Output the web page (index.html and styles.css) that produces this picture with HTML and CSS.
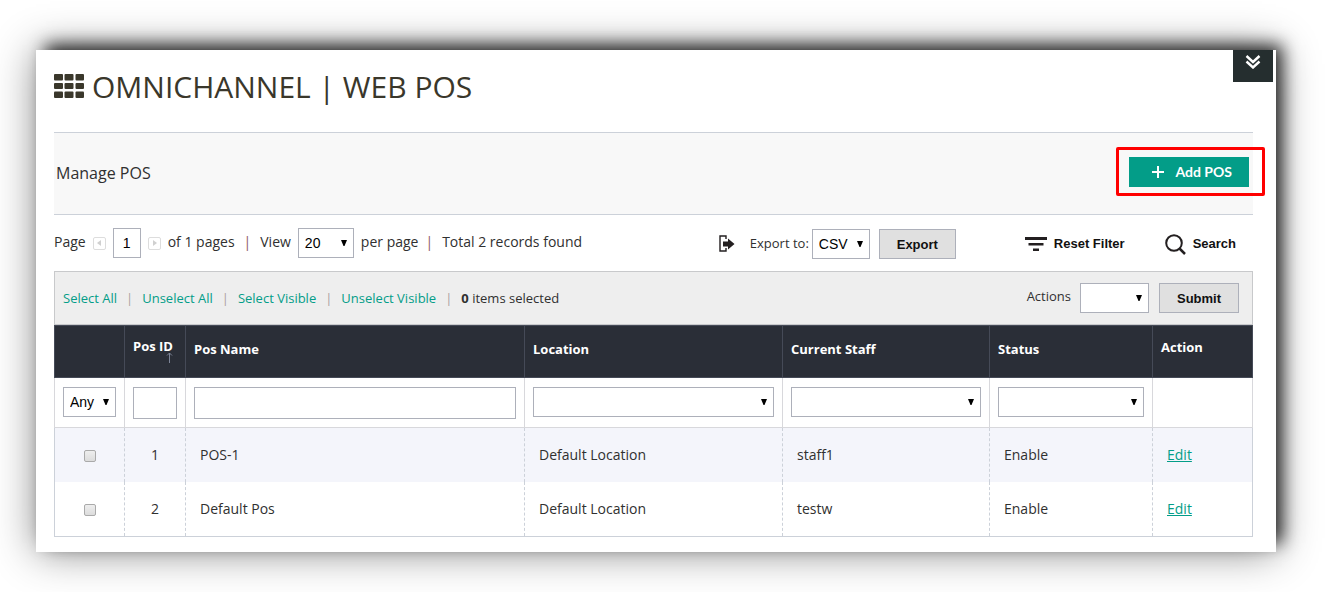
FILE: index.html
```html
<!DOCTYPE html>
<html lang="en">
<head>
<meta charset="utf-8">
<title>Omnichannel | Web POS</title>
<link rel="stylesheet" href="styles.css">
</head>
<body>
<main class="panel">
  <header class="masthead">
    <svg class="grid-icon" viewBox="0 0 30 24" aria-hidden="true">
      <g fill="#3a372b">
        <rect x="0" y="0" width="9" height="6.500" rx="1"/><rect x="10.500" y="0" width="9" height="6.500" rx="1"/><rect x="21.500" y="0" width="8.500" height="6.500" rx="1"/>
        <rect x="0" y="9" width="9" height="6" rx="1"/><rect x="10.500" y="9" width="9" height="6" rx="1"/><rect x="21.500" y="9" width="8.500" height="6" rx="1"/>
        <rect x="0" y="17.500" width="9" height="6.500" rx="1"/><rect x="10.500" y="17.500" width="9" height="6.500" rx="1"/><rect x="21.500" y="17.500" width="8.500" height="6.500" rx="1"/>
      </g>
    </svg>
    <h1 class="title">OMNICHANNEL | WEB POS</h1>
    <button class="menu-toggle" type="button" aria-label="Expand menu">
      <svg width="16" height="14" viewBox="0 0 16 14" fill="none" stroke="#fff" stroke-width="2.400"><path d="M1.500 1 8 7l6.500-6M1.500 6.500 8 12.500l6.500-6"/></svg>
    </button>
  </header>

  <section class="subhead">
    <h2 class="subtitle">Manage POS</h2>
    <div class="highlight">
      <button class="add-btn" type="button">
        <svg width="12" height="12" viewBox="0 0 12 12" stroke="#fff" stroke-width="2"><path d="M6 0v12M0 6h12"/></svg>
        Add POS
      </button>
    </div>
  </section>

  <section class="toolbar">
    <div class="pager">
      <label for="page">Page</label>
      <button class="step" type="button" aria-label="Previous page"><svg width="5" height="6" viewBox="0 0 5 6"><path fill="#d0d0d0" d="M4 0v6L0 3z"/></svg></button>
      <input class="field page-field" id="page" type="text" value="1">
      <button class="step" type="button" aria-label="Next page"><svg width="5" height="6" viewBox="0 0 5 6"><path fill="#d0d0d0" d="M1 0v6l4-3z"/></svg></button>
      <span>of 1 pages</span>
      <span class="bar">|</span>
      <label for="view">View</label>
      <select class="field select view-select" id="view"><option>20</option></select>
      <span>per page</span>
      <span class="bar bar-tight">|</span>
      <span>Total 2 records found</span>
    </div>
    <div class="tools">
      <svg class="export-icon" width="16" height="18" viewBox="0 0 16 18" aria-hidden="true"><path d="M7 4V1H1v15h6v-3" fill="none" stroke="#231f20" stroke-width="1.400"/><path d="M4 6.500h5V3.500L15.500 9 9 14.500v-3H4z" fill="#231f20"/></svg>
      <label class="export-label" for="export">Export to:</label>
      <select class="field select export-select" id="export"><option>CSV</option></select>
      <button class="btn export-btn" type="button">Export</button>
      <button class="link-btn reset-btn" type="button">
        <svg width="22" height="14" viewBox="0 0 22 14" fill="#231f20"><path d="M0 0h22v3H0zM3.500 6h15v2.500h-15zM8 11.500h6V14H8z"/></svg>
        Reset Filter
      </button>
      <button class="link-btn" type="button">
        <svg width="21" height="21" viewBox="0 0 21 21" fill="none" stroke="#231f20" stroke-width="2"><circle cx="9" cy="9" r="7.800"/><path d="m14.500 14.500 5.500 5.500" stroke-width="2.500"/></svg>
        Search
      </button>
    </div>
  </section>

  <section class="massaction">
    <nav class="select-links">
      <a href="#">Select All</a><span class="sep">|</span><a href="#">Unselect All</a><span class="sep">|</span><a href="#">Select Visible</a><span class="sep">|</span><a href="#">Unselect Visible</a><span class="sep">|</span><span><strong>0</strong> items selected</span>
    </nav>
    <div class="actions">
      <label class="actions-label" for="actions">Actions</label>
      <select class="field select actions-select" id="actions"><option></option></select>
      <button class="btn submit-btn" type="button">Submit</button>
    </div>
  </section>

  <table class="grid">
    <colgroup><col class="c-check"><col class="c-id"><col><col class="c-loc"><col class="c-staff"><col class="c-status"><col class="c-action"></colgroup>
    <thead>
      <tr class="heads">
        <th></th>
        <th class="sorted">Pos ID<svg class="sort-icon" width="7" height="11" viewBox="0 0 7 11" fill="none" stroke="#7d8598"><path d="M3.500 11V1M1 3.500 3.500 1 6 3.500"/></svg></th>
        <th>Pos Name</th><th>Location</th><th>Current Staff</th><th>Status</th><th class="plain">Action</th>
      </tr>
      <tr class="filters">
        <td><select class="field select" aria-label="Selection"><option>Any</option></select></td>
        <td><input class="field tall" type="text" aria-label="Pos ID"></td>
        <td><input class="field tall" type="text" aria-label="Pos Name"></td>
        <td><select class="field select" aria-label="Location"><option></option></select></td>
        <td><select class="field select" aria-label="Current Staff"><option></option></select></td>
        <td><select class="field select" aria-label="Status"><option></option></select></td>
        <td></td>
      </tr>
    </thead>
    <tbody>
      <tr class="odd">
        <td class="center"><input class="check" type="checkbox" aria-label="Select POS-1"></td>
        <td class="center">1</td><td>POS-1</td><td>Default Location</td><td>staff1</td><td>Enable</td><td><a class="edit" href="#">Edit</a></td>
      </tr>
      <tr>
        <td class="center"><input class="check" type="checkbox" aria-label="Select Default Pos"></td>
        <td class="center">2</td><td>Default Pos</td><td>Default Location</td><td>testw</td><td>Enable</td><td><a class="edit" href="#">Edit</a></td>
      </tr>
    </tbody>
  </table>
</main>
</body>
</html>
```

FILE: styles.css
```css
* { box-sizing: border-box; }

body {
  margin: 0;
  padding: 50px 54px 40px 36px;
  background: #fff;
  color: #303030;
  font: 400 14px/20px "Open Sans", "Noto Sans", sans-serif;
}

button, input, select { font-family: "Liberation Sans", Arial, sans-serif; margin: 0; }
button { cursor: pointer; border: 0; }

.panel {
  padding: 0 23px 15px 18px;
  background: #fff;
  box-shadow:
    8px -7px 16px -2px rgba(0, 0, 0, 0.8),
    0 0 40px 0 rgba(0, 0, 0, 0.45);
}

.masthead { display: flex; align-items: flex-start; height: 82px; }
.grid-icon { width: 30px; height: 24px; margin: 24px 8px 0 0; }
.title { flex: 1; margin: 17px 0 0; font-size: 30px; line-height: 40px; font-weight: 400; color: #3a372b; }
.menu-toggle {
  display: flex; justify-content: center; align-items: flex-start;
  width: 40px; height: 32px; padding: 5px 0 0; margin-right: -20px;
  background: #252e2f;
}

.subhead {
  display: flex; align-items: center; justify-content: space-between;
  height: 83px; padding: 0 0 2px 2px;
  background: #f8f8f8;
  border-top: 1px solid #ccd1d9; border-bottom: 1px solid #ccd1d9;
}
.subtitle { margin: 0; font-size: 16px; line-height: 24px; font-weight: 400; }
.highlight { padding: 7px 13px 6px 10px; margin: 0 -12px 2px 0; border: 3px solid #f00; border-radius: 2px; }
.add-btn {
  display: flex; align-items: center; justify-content: flex-end; gap: 11px;
  width: 120px; height: 30px; padding: 0 17px 0 0;
  background: #039d88; color: #fff;
  font: 700 14px/20px Lato, sans-serif;
}

.toolbar { display: flex; justify-content: space-between; height: 56px; padding: 13px 17px 0 0; }
.pager, .tools, .actions { display: flex; align-items: center; }
.pager { height: 30px; gap: 7px; white-space: nowrap; }
.pager > span, .pager > label { padding-bottom: 2px; }
.bar { color: #8c5868; padding: 0 2px; }
.bar-tight { padding-left: 0; }
.step {
  display: flex; align-items: center; justify-content: center;
  width: 13px; height: 13px; padding: 0;
  background: #fff; border: 1px solid #ddd; border-radius: 2px;
}

.field {
  width: 100%; height: 30px; padding: 0 6px;
  background-color: #fff; border: 1px solid #adb0ba; border-radius: 0;
  font-size: 14px; color: #000;
  display: block;
}
.select {
  appearance: none;
  background-image: url("data:image/svg+xml,%3Csvg xmlns='http://www.w3.org/2000/svg' width='6' height='6'%3E%3Cpath d='M0 0h6L3.500 6h-1z'/%3E%3C/svg%3E");
  background-repeat: no-repeat;
  background-position: right 6px center;
}
.tall { height: 32px; }
.page-field { width: 28px; padding: 0; text-align: center; }
.view-select { width: 56px; }

.tools { height: 32px; white-space: nowrap; }
.export-icon { margin-right: 15px; }
.export-label { padding-bottom: 2px; margin-right: 3px; font-size: 13px; }
.export-select { width: 58px; }
.btn {
  height: 30px; padding: 0;
  background: #e0e0e0; border: 1px solid #adb0ba; color: #111;
  font-size: 13px; font-weight: 700;
}
.export-btn { width: 77px; margin: 0 69px 0 9px; }
.link-btn {
  display: flex; align-items: center; gap: 7px; padding: 0;
  background: none; color: #111; font-size: 13px; line-height: 20px; font-weight: 700;
}
.reset-btn { margin-right: 40px; }

.massaction {
  display: flex; justify-content: space-between; align-items: center;
  height: 54px; padding: 0 13px 0 8px;
  background: #eee; border: 1px solid #c8c9cb;
  font-size: 13px; white-space: nowrap;
}
.select-links a { color: #039d88; text-decoration: none; }
.sep { margin: 0 9px; color: #aaa0a0; }
.actions-label { margin-right: 9px; padding-bottom: 4px; }
.actions-select { width: 69px; }
.submit-btn { width: 80px; margin-left: 10px; }

.grid { width: 100%; table-layout: fixed; border-collapse: collapse; }
.c-check { width: 70px; }
.c-id { width: 61px; }
.c-loc { width: 258px; }
.c-staff { width: 207px; }
.c-status { width: 163px; }
.c-action { width: 100px; }

.heads th {
  height: 52px; padding: 0 8px 6px;
  background: #2a2e37; border: 1px solid #454a57; color: #fff;
  font-size: 13px; line-height: 18px; font-weight: 700; text-align: left;
}
.heads .plain { padding-bottom: 10px; }
.heads .sorted { padding: 0 8px 4px; white-space: nowrap; }
.sort-icon { display: block; margin: -3px 4px 0 auto; }

.filters td { height: 50px; padding: 9px 8px 8px; border: 1px solid #d8d8dc; vertical-align: top; }

tbody td {
  height: 54px; padding: 0 14px;
  border-left: 1px dashed #ccd1d9; border-right: 1px dashed #ccd1d9;
}
tbody td:first-child { border-left-style: solid; }
tbody td:last-child { border-right-style: solid; }
tbody tr:last-child td { height: 55px; border-bottom: 1px solid #ccd1d9; }
.odd { background: #f4f5fb; }
tbody .center { padding: 0; text-align: center; }
.check {
  appearance: none;
  display: block; width: 12px; height: 12px; margin: 2px auto 0;
  background: linear-gradient(#eee, #dcdcdc); border: 1px solid #aaa; border-radius: 2px;
}
.edit { color: #039d88; }
```
